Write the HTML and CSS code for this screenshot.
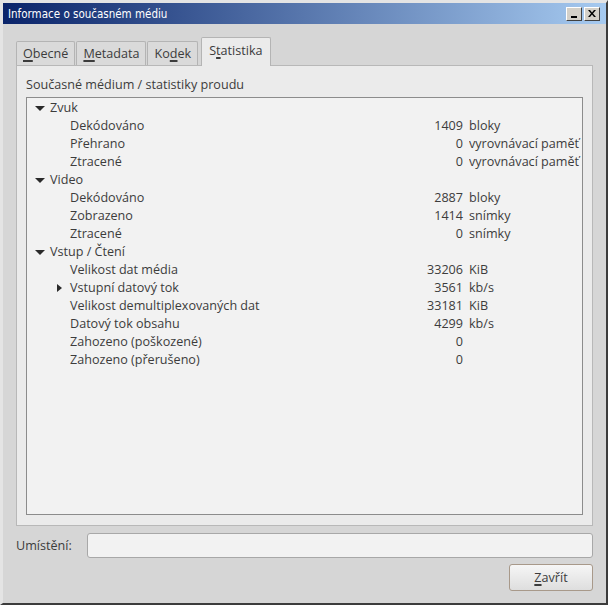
FILE: index.html
```html
<!DOCTYPE html>
<html lang="cs">
<head>
  <meta charset="UTF-8" />
  <title>Informace o současném médiu</title>
  <link rel="stylesheet" href="styles.css">
</head>
<body>
<div class="window">
  <div class="titlebar">
    <span class="title">Informace o současném médiu</span>
    <div class="title-buttons">
      <span class="tbtn">
        <svg width="8" height="8" viewBox="0 0 8 8"><rect x="1" y="6" width="6" height="2" fill="#000"/></svg>
      </span>
      <span class="tbtn">
        <svg width="8" height="7" viewBox="0 0 8 7"><path d="M0 0h2l2 2.5 2-2.5h2l-3 3.5 3 3.5h-2l-2-2.5-2 2.5h-2l3-3.5z" fill="#000"/></svg>
      </span>
    </div>
  </div>

  <div class="content">
    <div class="tabs">
      <span class="tab"><u>O</u>becné</span>
      <span class="tab"><u>M</u>etadata</span>
      <span class="tab">Ko<u>d</u>ek</span>
      <span class="tab active">S<u>t</u>atistika</span>
    </div>

    <div class="panel">
      <div class="panel-label">Současné médium / statistiky proudu</div>
      <div class="tree">
        <div class="row group"><span class="arrow down"></span>Zvuk</div>
        <div class="row"><span class="name">Dekódováno</span><span class="val">1409</span><span class="unit">bloky</span></div>
        <div class="row"><span class="name">Přehrano</span><span class="val">0</span><span class="unit">vyrovnávací paměť</span></div>
        <div class="row"><span class="name">Ztracené</span><span class="val">0</span><span class="unit">vyrovnávací paměť</span></div>

        <div class="row group"><span class="arrow down"></span>Video</div>
        <div class="row"><span class="name">Dekódováno</span><span class="val">2887</span><span class="unit">bloky</span></div>
        <div class="row"><span class="name">Zobrazeno</span><span class="val">1414</span><span class="unit">snímky</span></div>
        <div class="row"><span class="name">Ztracené</span><span class="val">0</span><span class="unit">snímky</span></div>

        <div class="row group"><span class="arrow down"></span>Vstup / Čtení</div>
        <div class="row"><span class="name">Velikost dat média</span><span class="val">33206</span><span class="unit">KiB</span></div>
        <div class="row"><span class="name"><span class="arrow right"></span>Vstupní datový tok</span><span class="val">3561</span><span class="unit">kb/s</span></div>
        <div class="row"><span class="name">Velikost demultiplexovaných dat</span><span class="val">33181</span><span class="unit">KiB</span></div>
        <div class="row"><span class="name">Datový tok obsahu</span><span class="val">4299</span><span class="unit">kb/s</span></div>
        <div class="row"><span class="name">Zahozeno (poškozené)</span><span class="val">0</span><span class="unit"></span></div>
        <div class="row"><span class="name">Zahozeno (přerušeno)</span><span class="val">0</span><span class="unit"></span></div>
      </div>
    </div>

    <div class="location">
      <label class="loc-label">Umístění:</label>
      <div class="loc-input"></div>
    </div>

    <div class="actions">
      <button class="btn"><u>Z</u>avřít</button>
    </div>
  </div>
</div>
</body>
</html>
```

FILE: styles.css
```css
html, body {
  margin: 0;
  padding: 0;
  background: #d6d6d6;
}
body {
  font-family: 'Open Sans', 'DejaVu Sans', sans-serif;
  font-size: 12.6px;
  color: #3c3c3c;
}
.window {
  width: 608px;
  height: 605px;
  box-sizing: border-box;
  border-style: solid;
  border-width: 3px 2px 2px 3px;
  border-color: #e4e4e4 #3c3c3c #3c3c3c #e4e4e4;
  background: #d6d6d6;
  display: flex;
  flex-direction: column;
}
.titlebar {
  height: 21px;
  flex: none;
  display: flex;
  align-items: center;
  justify-content: space-between;
  padding: 0 6px 0 5px;
  background: linear-gradient(to right, #0a246a, #a6caf0);
}
.title {
  color: #fff;
  font-family: 'DejaVu Sans Condensed', 'DejaVu Sans', sans-serif;
  font-stretch: condensed;
  font-size: 11.5px;
}
.title-buttons {
  display: flex;
  gap: 2px;
}
.tbtn {
  width: 16px;
  height: 14px;
  box-sizing: border-box;
  background: #d4d0c8;
  border-style: solid;
  border-width: 1px;
  border-color: #fff #404040 #404040 #fff;
  display: flex;
  align-items: center;
  justify-content: center;
}
.content {
  flex: 1;
  display: flex;
  flex-direction: column;
  padding: 14px 13px 0 13px;
}
.tabs {
  display: flex;
  align-items: flex-end;
  gap: 1px;
  height: 28px;
  margin-bottom: -1px;
  position: relative;
  z-index: 1;
}
.tab {
  height: 24px;
  margin-bottom: 1px;
  box-sizing: border-box;
  padding: 0 6px;
  display: flex;
  align-items: center;
  background: #dadada;
  border: 1px solid #b4b4b4;
  border-bottom: none;
  border-radius: 2px 2px 0 0;
}
.tab.active {
  height: 29px;
  margin-bottom: 0;
  margin-left: 2px;
  background: #ebebeb;
  padding: 0 7px 3px;
}
.tab u, .btn u {
  text-decoration-thickness: 2px;
  text-underline-offset: 2px;
}
.panel {
  height: 461px;
  box-sizing: border-box;
  background: #ebebeb;
  border: 1px solid #b8b8b8;
  padding: 0 9px 10px 9px;
  display: flex;
  flex-direction: column;
}
.panel-label {
  line-height: 16px;
  padding-top: 11px;
  margin-bottom: 4px;
}
.tree {
  flex: 1;
  background: #f2f2f2;
  border: 1px solid #8c8c8c;
  padding-top: 1px;
  overflow: hidden;
}
.row {
  height: 18px;
  line-height: 18px;
  display: grid;
  grid-template-columns: 375px 55px 1fr;
  column-gap: 6px;
  white-space: nowrap;
}
.row.group {
  display: flex;
  align-items: center;
  column-gap: 0;
  padding-left: 8px;
}
.name {
  padding-left: 43px;
  position: relative;
}
.val {
  text-align: right;
}
.unit {
  overflow: hidden;
}
.arrow {
  display: inline-block;
  width: 0;
  height: 0;
}
.arrow.down {
  border-left: 5px solid transparent;
  border-right: 5px solid transparent;
  border-top: 5px solid #2a2a2a;
  margin-right: 5px;
  margin-top: 1px;
}
.arrow.right {
  position: absolute;
  left: 30px;
  top: 5px;
  border-top: 4px solid transparent;
  border-bottom: 4px solid transparent;
  border-left: 5px solid #2a2a2a;
}
.location {
  display: flex;
  align-items: center;
  margin-top: 7px;
  height: 25px;
}
.loc-label {
  width: 71px;
}
.loc-input {
  flex: 1;
  height: 25px;
  box-sizing: border-box;
  background: #f2f2f2;
  border: 1px solid #a8a8a8;
  border-radius: 3px;
}
.actions {
  display: flex;
  justify-content: flex-end;
  margin-top: 6px;
}
.btn {
  width: 84px;
  height: 27px;
  font-family: inherit;
  font-size: 12.6px;
  color: #3c3c3c;
  background: linear-gradient(#f6f6f6, #dedede);
  border: 1px solid #a8998a;
  border-radius: 3px;
  padding: 0;
}
```
